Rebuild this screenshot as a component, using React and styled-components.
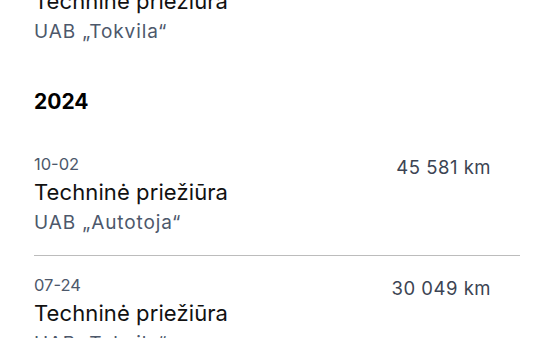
import React from 'react'
import styled, { createGlobalStyle } from "styled-components";

const GlobalStyle = createGlobalStyle`
  html, body {
    margin: 0;
    padding: 0;
    background: #ffffff;
    overflow: hidden;
  }
  body {
    font-family: Inter, "Noto Sans", sans-serif;
  }
`;

const Page = styled.div`
  width: 554px;
  height: 338px;
  overflow: hidden;
  box-sizing: border-box;
  padding: 0 34px;
`;

const Scroller = styled.div`
  margin-top: -56px;
`;

const YearSection = styled.section`
  display: flex;
  flex-direction: column;
`;

const YearTitle = styled.h2`
  margin: 24px 0 19px;
  font-size: 21px;
  line-height: 28px;
  font-weight: 700;
  color: #000;
`;

const Item = styled.div`
  display: flex;
  justify-content: space-between;
  align-items: flex-start;
  padding: 17px 29px 19px 0;
  border-bottom: ${(p) => (p.last ? "none" : "1px solid #bcbcbc")};
`;

const Info = styled.div`
  display: flex;
  flex-direction: column;
`;

const DateText = styled.div`
  font-size: 16.5px;
  line-height: 24px;
  color: #4d586b;
`;

const Name = styled.div`
  font-size: 22px;
  line-height: 33px;
  letter-spacing: 0.1px;
  color: #111;
`;

const Company = styled.div`
  font-size: 19px;
  line-height: 27px;
  letter-spacing: 0.9px;
  color: #4d586b;
`;

const Km = styled.div`
  padding-top: 3px;
  font-size: 18.5px;
  line-height: 24px;
  letter-spacing: 0.5px;
  color: #3c4453;
`;

const data = [
  {
    year: null,
    items: [{ date: "11-15", name: "Techninė priežiūra", company: "UAB „Tokvila“", km: "" }],
  },
  {
    year: "2024",
    items: [
      { date: "10-02", name: "Techninė priežiūra", company: "UAB „Autotoja“", km: "45 581 km" },
      { date: "07-24", name: "Techninė priežiūra", company: "UAB „Tokvila“", km: "30 049 km" },
    ],
  },
];

const App = () => {
  return (
    <Page>
      <GlobalStyle />
      <Scroller>
        {data.map((section, i) => (
          <YearSection key={i}>
            {section.year && <YearTitle>{section.year}</YearTitle>}
            {section.items.map((it, j) => (
              <Item key={j} last={j === section.items.length - 1 && !section.year}>
                <Info>
                  <DateText>{it.date}</DateText>
                  <Name>{it.name}</Name>
                  <Company>{it.company}</Company>
                </Info>
                {it.km && <Km>{it.km}</Km>}
              </Item>
            ))}
          </YearSection>
        ))}
      </Scroller>
    </Page>
  );
};

export default App
